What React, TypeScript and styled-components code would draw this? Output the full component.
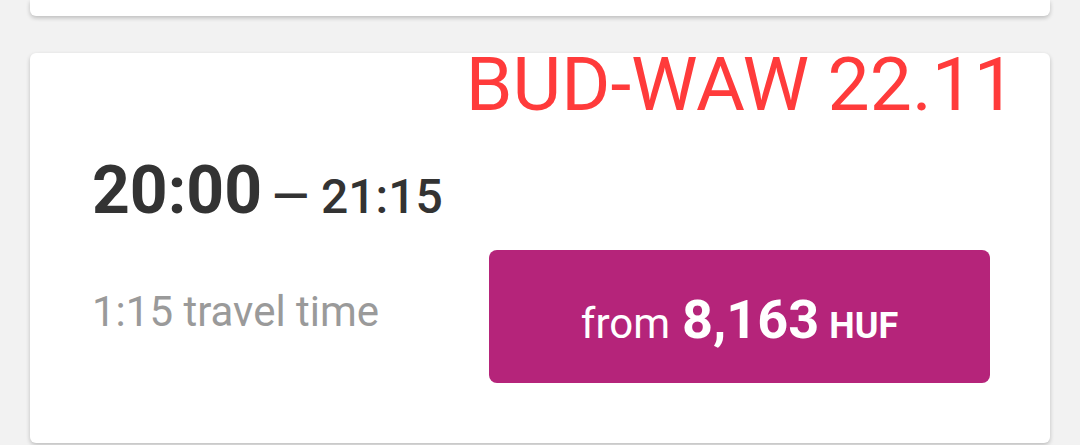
import styled, { createGlobalStyle } from 'styled-components'

const GlobalStyle = createGlobalStyle`
  html, body {
    margin: 0;
    padding: 0;
    background: #f2f2f2;
    font-family: Roboto, "Noto Sans", sans-serif;
  }
`

const List = styled.div`
  width: 1080px;
  height: 445px;
  overflow: hidden;
  display: flex;
  flex-direction: column;
  gap: 37px;
`

const Card = styled.div<{ $height: number; $cut?: boolean }>`
  position: relative;
  margin: 0 30px;
  height: ${(p) => p.$height}px;
  flex-shrink: 0;
  background: #fff;
  border-radius: ${(p) => (p.$cut ? '0 0 6px 6px' : '6px')};
  box-shadow: 0 2px 4px rgba(0, 0, 0, 0.22);
  box-sizing: border-box;
`

const FlightCard = styled(Card)`
  display: grid;
  grid-template-columns: 1fr 501px;
  grid-template-rows: 66px 133px;
  row-gap: 26px;
  align-items: center;
  align-content: start;
  padding: 105px 60px 0 62px;
`

// route label pinned over the card's top-right corner
const Route = styled.div`
  position: absolute;
  top: -6px;
  right: 34px;
  font-size: 75px;
  line-height: 1;
  color: #ff3b3b;
  white-space: nowrap;
`

const Times = styled.div`
  grid-column: 1 / -1;
  align-self: start;
  height: 66px;
  font-size: 66px;
  line-height: 66px;
  color: #333;
  white-space: nowrap;
`

const Departure = styled.span`
  font-weight: 700;
`

const Arrival = styled.span`
  font-size: 48px;
  font-weight: 500;
  margin-left: 10px;
`

const Duration = styled.div`
  font-size: 42px;
  line-height: 1;
  color: #9a9a9a;
  margin-bottom: 10px;
`

const PriceButton = styled.button`
  height: 133px;
  border: none;
  border-radius: 8px;
  background: #b5247a;
  color: #fff;
  font-family: inherit;
  display: flex;
  align-items: center;
  justify-content: center;
  padding: 6px 0 0;
  cursor: pointer;
`

const Label = styled.span`
  line-height: 1;
  white-space: nowrap;
`

const Prefix = styled.span`
  font-size: 42px;
  margin-right: 12px;
`

const Amount = styled.span`
  font-size: 54px;
  font-weight: 700;
  margin-right: 10px;
`

const Currency = styled.span`
  font-size: 36px;
  font-weight: 700;
`

export default function App() {
  return (
    <>
      <GlobalStyle />
      <List>
        <Card $height={16} $cut />
        <FlightCard $height={390}>
          <Route>BUD-WAW 22.11</Route>
          <Times>
            <Departure>20:00</Departure>
            <Arrival>— 21:15</Arrival>
          </Times>
          <Duration>1:15 travel time</Duration>
          <PriceButton>
            <Label>
              <Prefix>from</Prefix>
              <Amount>8,163</Amount>
              <Currency>HUF</Currency>
            </Label>
          </PriceButton>
        </FlightCard>
      </List>
    </>
  )
}
